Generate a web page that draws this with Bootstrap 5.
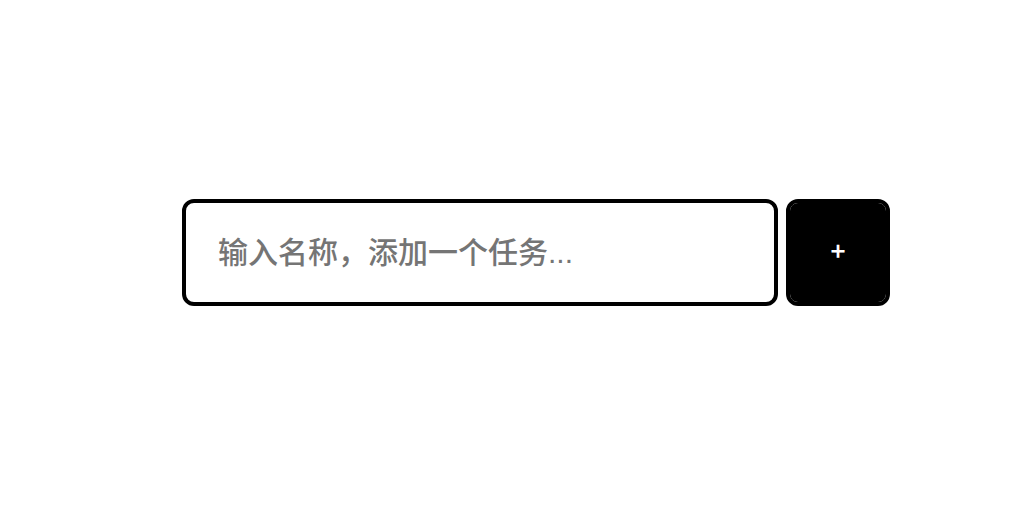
<!DOCTYPE html>
<html lang="zh-CN">
<head>
    <meta charset="UTF-8">
    <meta name="viewport" content="width=device-width, initial-scale=1">
    <title>任务</title>
    <link href="https://cdn.jsdelivr.net/npm/bootstrap@5.3.3/dist/css/bootstrap.min.css" rel="stylesheet">
    <style>
        body {
          font-family: "Liberation Sans", "Noto Sans CJK SC", sans-serif;
        }
        .task-page {
          padding: 0 0 15px 38px;
        }
        .task-form {
          max-width: 708px;
        }
        .task-input,
        .task-add {
          border: 4px solid #000;
          border-radius: 12px;
        }
        .task-input {
          height: 107px;
          padding: 0 32px;
          font-size: 30px;
          font-weight: 500;
        }
        .task-input:focus {
          border-color: #000;
          box-shadow: none;
        }
        .task-input::placeholder {
          color: #757575;
        }
        .task-add {
          width: 104px;
          padding: 0 0 4px;
          background: #000;
          background-clip: padding-box;
          color: #fff;
          font-family: Inter, sans-serif;
          font-size: 27px;
          font-weight: 500;
        }
    </style>
</head>
<body class="bg-white">

<main class="task-page min-vh-100 d-flex align-items-center justify-content-center">
    <form id="taskForm" class="task-form w-100 d-flex gap-2">
        <input type="text" class="form-control task-input" id="taskName" placeholder="输入名称，添加一个任务..." aria-label="任务名称" autocomplete="off">
        <button type="submit" class="task-add flex-shrink-0">+</button>
    </form>
</main>

<script src="https://cdn.jsdelivr.net/npm/bootstrap@5.3.3/dist/js/bootstrap.bundle.min.js"></script>
<script>
    const form = document.getElementById("taskForm");

    form.addEventListener("submit", function (e) {
      e.preventDefault();
      form.reset();
    });
</script>

</body>
</html>
